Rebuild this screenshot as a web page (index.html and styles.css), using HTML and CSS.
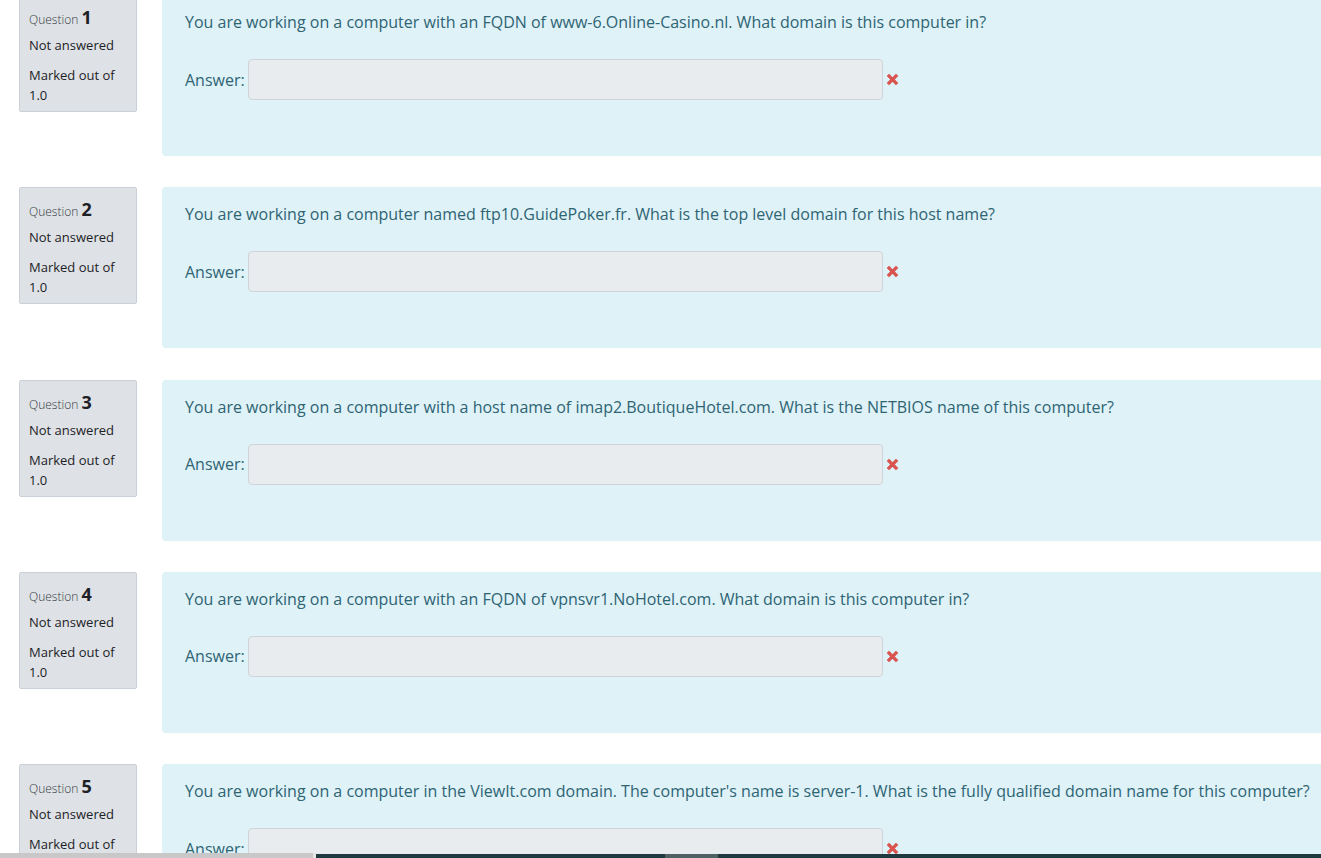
FILE: index.html
```html
<!DOCTYPE html>
<html lang="en">
<head>
    <meta charset="UTF-8">
    <meta name="viewport" content="width=device-width, initial-scale=1.0">
    <title>Quiz attempt</title>
    <link rel="stylesheet" href="styles.css">
</head>
<body>
    <div class="quiz">
        <div class="que">
            <div class="info">
                <h3 class="no">Question <span class="qno">1</span></h3>
                <div class="state">Not answered</div>
                <div class="grade">Marked out of 1.0</div>
            </div>
            <div class="formulation">
                <div class="qtext">You are working on a computer with an FQDN of www-6.Online-Casino.nl. What domain is this computer in?</div>
                <div class="ablock">
                    <label for="q1">Answer:</label>
                    <input type="text" id="q1" class="answer" readonly>
                    <svg class="wrong" viewBox="0 0 14 14"><path d="M2 2L12 12M12 2L2 12"/></svg>
                </div>
            </div>
        </div>

        <div class="que">
            <div class="info">
                <h3 class="no">Question <span class="qno">2</span></h3>
                <div class="state">Not answered</div>
                <div class="grade">Marked out of 1.0</div>
            </div>
            <div class="formulation">
                <div class="qtext">You are working on a computer named ftp10.GuidePoker.fr. What is the top level domain for this host name?</div>
                <div class="ablock">
                    <label for="q2">Answer:</label>
                    <input type="text" id="q2" class="answer" readonly>
                    <svg class="wrong" viewBox="0 0 14 14"><path d="M2 2L12 12M12 2L2 12"/></svg>
                </div>
            </div>
        </div>

        <div class="que">
            <div class="info">
                <h3 class="no">Question <span class="qno">3</span></h3>
                <div class="state">Not answered</div>
                <div class="grade">Marked out of 1.0</div>
            </div>
            <div class="formulation">
                <div class="qtext">You are working on a computer with a host name of imap2.BoutiqueHotel.com. What is the NETBIOS name of this computer?</div>
                <div class="ablock">
                    <label for="q3">Answer:</label>
                    <input type="text" id="q3" class="answer" readonly>
                    <svg class="wrong" viewBox="0 0 14 14"><path d="M2 2L12 12M12 2L2 12"/></svg>
                </div>
            </div>
        </div>

        <div class="que">
            <div class="info">
                <h3 class="no">Question <span class="qno">4</span></h3>
                <div class="state">Not answered</div>
                <div class="grade">Marked out of 1.0</div>
            </div>
            <div class="formulation">
                <div class="qtext">You are working on a computer with an FQDN of vpnsvr1.NoHotel.com. What domain is this computer in?</div>
                <div class="ablock">
                    <label for="q4">Answer:</label>
                    <input type="text" id="q4" class="answer" readonly>
                    <svg class="wrong" viewBox="0 0 14 14"><path d="M2 2L12 12M12 2L2 12"/></svg>
                </div>
            </div>
        </div>

        <div class="que">
            <div class="info">
                <h3 class="no">Question <span class="qno">5</span></h3>
                <div class="state">Not answered</div>
                <div class="grade">Marked out of 1.0</div>
            </div>
            <div class="formulation">
                <div class="qtext">You are working on a computer in the ViewIt.com domain. The computer's name is server-1. What is the fully qualified domain name for this computer?</div>
                <div class="ablock">
                    <label for="q5">Answer:</label>
                    <input type="text" id="q5" class="answer" readonly>
                    <svg class="wrong" viewBox="0 0 14 14"><path d="M2 2L12 12M12 2L2 12"/></svg>
                </div>
            </div>
        </div>
    </div>

    <!-- horizontal scrollbar strip along the bottom edge -->
    <div class="hscroll">
        <div class="hscroll-left"></div>
        <div class="hscroll-track"><div class="hscroll-thumb"></div></div>
    </div>
</body>
</html>
```

FILE: styles.css
```css
body {
    font-family: "Open Sans", "Noto Sans", Arial, sans-serif;
    margin: 0;
    background: #fff;
    color: #1d2125;
    overflow: hidden;
}
.quiz {
    width: 1500px;
    margin-top: -5px;
}
.que {
    display: flex;
    align-items: flex-start;
    gap: 25px;
    margin-bottom: 31.25px;
}
.info {
    flex: none;
    box-sizing: border-box;
    width: 118px;
    margin-left: 19px;
    padding: 9px 9px 6px;
    background-color: #dee2e6;
    border: 1px solid #cad0d7;
    border-radius: 2px;
    font-size: 13px;
}
.no {
    margin: 0 0 6px;
    font-size: 12px;
    font-weight: 300;
    line-height: 24px;
    height: 24px;
    color: #343a40;
}
.qno {
    font-size: 18px;
    font-weight: 700;
    color: #1d2125;
}
.state {
    line-height: 20px;
    margin-bottom: 10px;
}
.grade {
    line-height: 20px;
    width: 90px;
}
.formulation {
    flex: 1;
    box-sizing: border-box;
    min-height: 161px;
    padding: 15px 23px 20px;
    background-color: #def2f8;
    border-radius: 4px 0 0 4px;
    color: #2f6473;
    font-size: 16px;
}
.qtext {
    line-height: 24px;
    margin-bottom: 25px;
}
.ablock {
    display: flex;
    align-items: center;
}
.ablock label {
    width: 63px;
    flex: none;
}
.answer {
    box-sizing: border-box;
    width: 635px;
    height: 41px;
    background-color: #e9ecef;
    border: 1px solid #ced4da;
    border-radius: 4px;
    margin: 0;
}
.wrong {
    width: 13px;
    height: 13px;
    margin-left: 3px;
    fill: none;
    stroke: #d9534f;
    stroke-width: 3.6;
}
.hscroll {
    position: fixed;
    left: 0;
    right: 0;
    bottom: 0;
    height: 5px;
    display: flex;
    align-items: flex-end;
}
.hscroll-left {
    width: 313px;
    height: 5px;
    background: #c8c8c8;
    border-right: 3px solid #e6e6e6;
}
.hscroll-track {
    flex: 1;
    height: 4px;
    background: #1e3a3e;
    position: relative;
}
.hscroll-thumb {
    position: absolute;
    left: 349px;
    width: 53px;
    top: 0;
    bottom: 0;
    background: #4f6062;
}
```
